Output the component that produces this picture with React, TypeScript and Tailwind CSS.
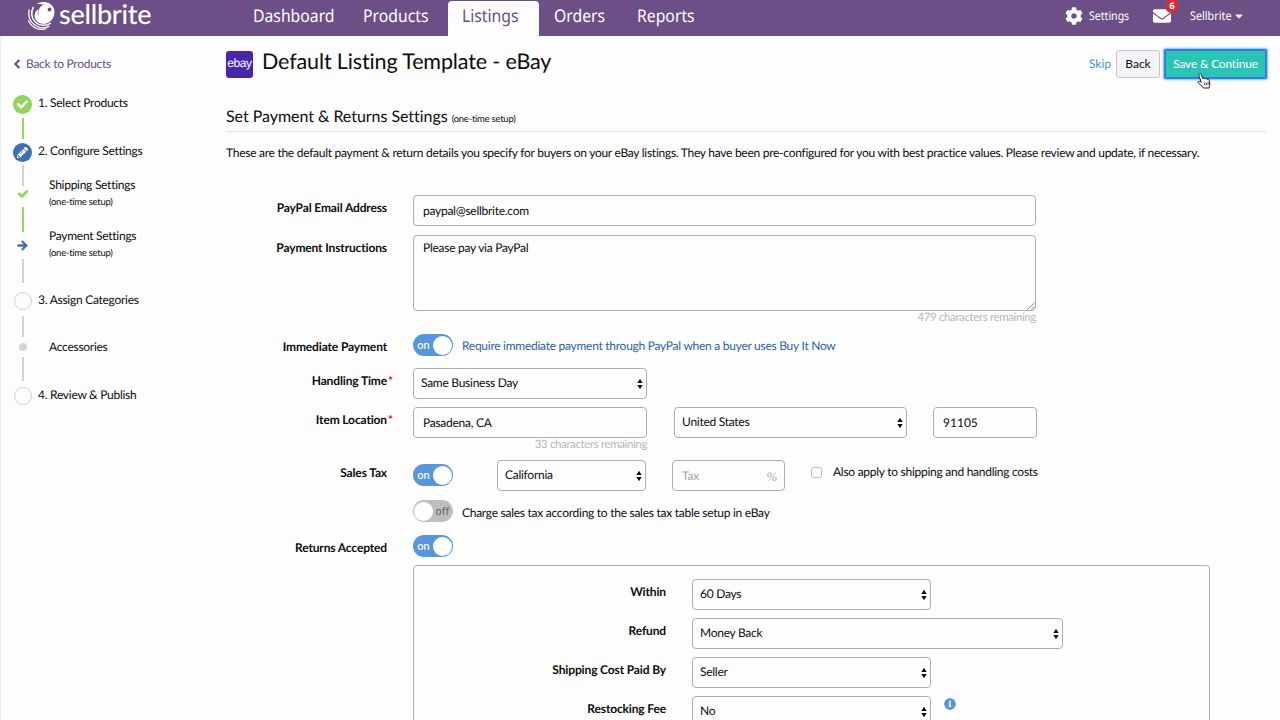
import type { ReactNode } from "react";
import {
  FaArrowRight,
  FaCaretDown,
  FaCheck,
  FaChevronLeft,
  FaCog,
  FaEnvelope,
  FaInfoCircle,
  FaPencilAlt,
} from "react-icons/fa";
import clsx from "clsx";

const NAV_ITEMS = [
  { label: "Dashboard", width: "w-[110px]" },
  { label: "Products", width: "w-[99px]" },
  { label: "Listings", width: "mr-px w-[91px]", active: true },
  { label: "Orders", width: "w-[83px]" },
  { label: "Reports", width: "w-[90px]" },
];

function Logo() {
  return (
    <div className="flex items-center gap-[3px] text-white">
      <svg className="h-[31px] w-[30px]" viewBox="0 0 30 31" fill="none">
        <path
          d="M10.500 4.200C14 1.500 20 1.200 24 3.700C27.800 6 29.300 11 28 15.500C26.500 21 21.500 24.500 16.500 23.800C11.500 23.200 8.300 19.500 8.600 15.300C8.800 12.300 10.300 10.200 12.500 9.200C11.300 11.800 11.600 14 12.800 15.600C11.500 10.500 13.500 6.500 18 4.600C15.500 3.800 12.800 3.700 10.500 4.200Z"
          fill="currentColor"
        />
        <path
          d="M7.500 7C4.500 12 5.300 18.500 9.500 22.300C13.500 26 20 26.500 25 23"
          stroke="currentColor"
          strokeWidth="1.500"
        />
        <path
          d="M3.300 9.500C1.800 15.500 3.700 21.500 8.800 25C13.500 28.200 19 28.500 23.500 26.200"
          stroke="currentColor"
          strokeWidth="1.300"
        />
        <path
          d="M2.300 20.500C5.500 27.500 13 31 20.500 28.700"
          stroke="currentColor"
          strokeWidth="1.200"
        />
        <circle cx="23.500" cy="9.500" r="1.900" fill="#6b4f86" />
      </svg>
      <span className="-mt-[4px] text-[27px] leading-[26px] font-medium tracking-[-0.25px]">
        sellbrite
      </span>
    </div>
  );
}

function Header() {
  return (
    <header className="flex h-9 bg-[#6b4f86] font-['Noto_Sans',sans-serif] tracking-normal text-white">
      <div className="w-[239px] pl-[26px] font-['Lato',sans-serif]">
        <Logo />
      </div>
      <nav className="flex items-end">
        {NAV_ITEMS.map((item) => (
          <a
            key={item.label}
            href="#"
            className={clsx(
              "h-[35px] pl-3.5 text-[17.5px] leading-[31px]",
              item.width,
              item.active && "rounded-t-[4px] bg-[#fdfdfd] text-[#6b4f86]"
            )}
          >
            <span className="inline-block origin-left scale-x-[.9]">
              {item.label}
            </span>
          </a>
        ))}
      </nav>
      <div className="ml-auto flex items-center pr-9 pb-1 text-[12px]">
        <FaCog className="h-[18px] w-[18px]" />
        <span className="w-[70px] pl-1.5">
          <span className="inline-block origin-left scale-x-[.88]">
            Settings
          </span>
        </span>
        <span className="relative">
          <FaEnvelope className="h-[18px] w-[18px]" />
          <span className="absolute -top-[8px] left-3 flex h-[14px] w-[14px] items-center justify-center rounded-full bg-[#d0303a] text-[9px] leading-[14px] font-bold">
            6
          </span>
        </span>
        <span className="w-[62px] pl-[19px]">
          <span className="inline-block origin-left scale-x-[.9]">
            Sellbrite
          </span>
        </span>
        <FaCaretDown className="ml-px h-3 w-2.5" />
      </div>
    </header>
  );
}

type StepStatus = "done" | "editing" | "todo" | "sub-done" | "sub-current" | "sub-todo";

interface Step {
  label: string;
  note?: string;
  status: StepStatus;
  height: string;
  line?: string;
}

const STEPS: Step[] = [
  { label: "1. Select Products", status: "done", height: "h-12", line: "h-[21px] bg-[#96d75f]" },
  { label: "2. Configure Settings", status: "editing", height: "h-[47px]", line: "h-[21px] bg-[#d4d2d6]" },
  { label: "Shipping Settings", note: "(one-time setup)", status: "sub-done", height: "h-[51px]", line: "h-[25px] bg-[#96d75f]" },
  { label: "Payment Settings", note: "(one-time setup)", status: "sub-current", height: "h-[51px]", line: "h-6 bg-[#d4d2d6]" },
  { label: "3. Assign Categories", status: "todo", height: "h-[51px]", line: "h-[21px] bg-[#d4d2d6]" },
  { label: "Accessories", status: "sub-todo", height: "h-11", line: "h-6 bg-[#d4d2d6]" },
  { label: "4. Review & Publish", status: "todo", height: "h-[22px]" },
];

function StepIcon({ status }: { status: StepStatus }) {
  switch (status) {
    case "done":
      return (
        <span className="flex h-[22px] items-center">
          <span className="flex h-[19px] w-[19px] items-center justify-center rounded-full bg-[#8fd45c] text-white">
            <FaCheck className="h-[11px] w-[11px] stroke-[24]" />
          </span>
        </span>
      );
    case "editing":
      return (
        <span className="flex h-[22px] items-center">
          <span className="flex h-[19px] w-[19px] items-center justify-center rounded-full bg-[#3b71b0] text-white">
            <FaPencilAlt className="h-[11px] w-[11px]" />
          </span>
        </span>
      );
    case "sub-done":
      return (
        <span className="flex h-3 items-center text-[#8fd45c]">
          <FaCheck className="h-[10px] w-[10px] overflow-visible stroke-[50]" />
        </span>
      );
    case "sub-current":
      return (
        <span className="flex h-3 items-center text-[#3b71b0]">
          <FaArrowRight className="h-[11px] w-[11px] overflow-visible stroke-[36]" />
        </span>
      );
    case "sub-todo":
      return (
        <span className="flex h-3 items-center">
          <span className="h-2 w-2 rounded-full bg-[#d4d4d4]" />
        </span>
      );
    default:
      return (
        <span className="flex h-[22px] items-center">
          <span className="h-[18px] w-[18px] rounded-full border-[1.5px] border-[#d0d0d0]" />
        </span>
      );
  }
}

function Sidebar() {
  return (
    <aside className="w-[226px] shrink-0 border-l border-[#efedf2] pt-[18px] pl-3">
      <a href="#" className="flex items-center gap-[5px] text-[#6b4f86]">
        <FaChevronLeft className="h-2.5 w-2 overflow-visible stroke-[40]" />
        Back to Products
      </a>
      <ol className="mt-[19px]">
        {STEPS.map((step) => {
          const isSub = step.status.startsWith("sub");
          return (
            <li key={step.label} className={clsx("flex", step.height)}>
              <div className="flex w-[19px] flex-col items-center">
                <StepIcon status={step.status} />
                {step.line && (
                  <span className="flex flex-1 items-center">
                    <span className={clsx("w-[2px]", step.line)} />
                  </span>
                )}
              </div>
              <div
                className={clsx(
                  isSub ? "pl-[17px]" : "pl-1.5",
                  isSub && (step.note ? "-mt-[13px]" : "-mt-1")
                )}
              >
                <div>{step.label}</div>
                {step.note && (
                  <div className="-mt-[2.5px] text-[9.5px]">{step.note}</div>
                )}
              </div>
            </li>
          );
        })}
      </ol>
    </aside>
  );
}

function Toggle({ on = false }: { on?: boolean }) {
  return (
    <button
      type="button"
      role="switch"
      aria-checked={on}
      className={clsx(
        "flex h-[22px] w-10 shrink-0 items-center rounded-full px-px text-[11px] leading-none font-medium tracking-normal",
        on
          ? "bg-[#5896db] text-white"
          : "flex-row-reverse bg-[#bfbdc1] text-[#6d6b70]"
      )}
    >
      <span className="flex-1 pb-px text-center">{on ? "on" : "off"}</span>
      <span className="h-[19px] w-[19px] rounded-full bg-white" />
    </button>
  );
}

const BOX = "h-[31px] rounded-[4px] border border-[#adadad]";

function Select({ value, width }: { value: string; width: string }) {
  return (
    <div
      className={clsx("flex items-center justify-between pr-[3px] pl-[7px]", BOX, width)}
    >
      <span className="-mt-px">{value}</span>
      <svg className="h-3 w-[6px]" viewBox="0 0 6 12" fill="#111">
        <path d="M3 .8L5.700 5H.3ZM3 11.200L5.700 7H.3Z" />
      </svg>
    </div>
  );
}

function TextBox({ value, width }: { value: string; width: string }) {
  return (
    <div className={clsx("flex items-center pl-[9px]", BOX, width)}>{value}</div>
  );
}

interface FormRowProps {
  label?: string;
  required?: boolean;
  height: string;
  labelWidth?: string;
  children: ReactNode;
}

function FormRow({
  label,
  required,
  height,
  labelWidth = "w-[161px]",
  children,
}: FormRowProps) {
  return (
    <div className={clsx("flex items-start", height)}>
      <div
        className={clsx(
          "relative shrink-0 pt-[3px] text-right font-bold tracking-[-0.14px]",
          labelWidth
        )}
      >
        {label}
        {required && (
          <span className="absolute top-[3px] left-full pl-px text-[#c9302c]">*</span>
        )}
      </div>
      <div className="flex items-start pl-[26px]">{children}</div>
    </div>
  );
}

function ReturnsPanel() {
  const labelWidth = "w-[252px]";
  return (
    <div className="ml-[187px] h-[220px] w-[797px] rounded-[4px] border border-[#adadad] pt-[13px]">
      <FormRow label="Within" height="h-[39px]" labelWidth={labelWidth}>
        <Select value="60 Days" width="w-[239px]" />
      </FormRow>
      <FormRow label="Refund" height="h-[39px]" labelWidth={labelWidth}>
        <Select value="Money Back" width="w-[371px]" />
      </FormRow>
      <FormRow label="Shipping Cost Paid By" height="h-[39px]" labelWidth={labelWidth}>
        <Select value="Seller" width="w-[239px]" />
      </FormRow>
      <FormRow label="Restocking Fee" height="h-[39px]" labelWidth={labelWidth}>
        <Select value="No" width="w-[239px]" />
        <FaInfoCircle className="mt-0.5 ml-[13px] h-3 w-3 text-[#5896db]" />
      </FormRow>
    </div>
  );
}

function HandCursor() {
  return (
    <svg
      className="absolute top-[22px] left-[31px] h-[16px] w-[14px]"
      viewBox="0 0 14 16"
      fill="#fff"
      stroke="#222"
      strokeWidth="1"
      strokeLinejoin="round"
    >
      <path d="M2.200 1.200C3 .5 4 .8 4.400 1.800L5.800 5.600C6.300 5 7.400 5 7.800 5.900C8.500 5.300 9.600 5.500 10 6.400C10.800 5.900 11.800 6.300 12.100 7.200L12.800 10C13.100 11.500 12.600 12.500 12.300 13.500L12.200 15H6.300L5.800 13.900C4.600 12.700 3.200 11.300 1.200 9.800C.6 9.200 1.200 8 2.400 8.300L4.200 9.200L1.900 2.600C1.700 2 1.800 1.600 2.200 1.200Z" />
      <path d="M7.200 9.500L7.700 12.500M9.200 9.300L9.500 12.300M11 9L11.200 12" strokeWidth=".8" />
    </svg>
  );
}

export default function App() {
  return (
    <div className="h-[720px] w-[1280px] overflow-hidden bg-[#fdfdfd] font-['Lato',sans-serif] text-[12px] leading-5 tracking-[-0.27px] text-[#0c0c0c] [font-variant-ligatures:none] [text-rendering:geometricPrecision]">
      <Header />
      <div className="flex">
        <Sidebar />
        <main className="w-[1040px] shrink-0">
          {/* Title bar */}
          <div className="flex items-center pt-[13px]">
            <span className="flex h-[27px] w-[27px] items-center justify-center rounded-[3px] bg-[#4a25a5] font-['Liberation_Sans',sans-serif] text-[12px] leading-none tracking-[-0.4px] text-white">
              <span className="-mt-0.5">ebay</span>
            </span>
            <h1 className="-mt-[5px] pl-[9px] text-[21.5px] leading-[27px] tracking-[-0.13px]">
              Default Listing Template - eBay
            </h1>
            <div className="ml-auto flex items-center">
              <a href="#" className="pr-[5px] tracking-normal text-[#4b8fd0]">
                Skip
              </a>
              <button
                type="button"
                className="h-7 w-11 rounded-[3px] border border-[#c6c3ca] bg-[#f5f3f7] tracking-normal"
              >
                Back
              </button>
              <button
                type="button"
                className="relative -mr-px ml-1 h-[30px] w-[103px] rounded-[2px] border-2 border-[#2a83dc] bg-[#2bc4b4] tracking-[-0.2px] text-white shadow-[0_0_2px_1px_#7fb4ee]"
              >
                Save &amp; Continue
                <HandCursor />
              </button>
            </div>
          </div>

          <h2 className="mt-[27px] h-[26px] border-b border-[#e0e0e0] pt-px text-[16px] tracking-[-0.04px]">
            Set Payment &amp; Returns Settings{" "}
            <span className="text-[9.5px] tracking-[-0.25px]">
              (one-time setup)
            </span>
          </h2>
          <p className="mt-[11px] whitespace-nowrap">
            These are the default payment &amp; return details you specify for
            buyers on your eBay listings. They have been pre-configured for you
            with best practice values. Please review and update, if necessary.
          </p>

          {/* Payment form */}
          <div className="mt-[32px]">
            <FormRow label="PayPal Email Address" height="h-10">
              <TextBox value="paypal@sellbrite.com" width="w-[623px]" />
            </FormRow>
            <FormRow label="Payment Instructions" height="h-[99px]">
              <div>
                <div className="relative h-[76px] w-[623px] rounded-[4px] border border-[#adadad] pt-[2px] pl-[9px]">
                  Please pay via PayPal
                  <svg
                    className="absolute right-0 bottom-0 h-2 w-2"
                    viewBox="0 0 8 8"
                    stroke="#777"
                    strokeWidth=".9"
                  >
                    <path d="M.5 7.500L7.500 .8M4.300 7.500L7.500 4.400" />
                  </svg>
                </div>
                <div className="-mt-[3px] text-right text-[11.5px] tracking-[-0.38px] text-[#b8b8b8]">
                  479 characters remaining
                </div>
              </div>
            </FormRow>
            <FormRow label="Immediate Payment" height="h-[34px]">
              <Toggle on />
              <span className="pt-0.5 pl-[9px] text-[#2c639f]">
                Require immediate payment through PayPal when a buyer uses Buy
                It Now
              </span>
            </FormRow>
            <FormRow label="Handling Time" required height="h-[39px]">
              <Select value="Same Business Day" width="w-[234px]" />
            </FormRow>
            <FormRow label="Item Location" required height="h-[53px]">
              <div>
                <TextBox value="Pasadena, CA" width="w-[234px]" />
                <div className="-mt-[3px] text-right text-[11.5px] tracking-[-0.38px] text-[#b8b8b8]">
                  33 characters remaining
                </div>
              </div>
              <div className="pl-[27px]">
                <Select value="United States" width="w-[233px]" />
              </div>
              <div className="pl-[26px] tracking-normal">
                <TextBox value="91105" width="w-[104px]" />
              </div>
            </FormRow>
            <FormRow label="Sales Tax" height="h-10">
              <div className="flex w-[84px] pt-1">
                <Toggle on />
              </div>
              <Select value="California" width="w-[149px]" />
              <div className="pl-[26px]">
                <div
                  className={clsx(
                    "flex w-[113px] items-center justify-between pr-[7px] pl-[9px] text-[#a9a9a9]",
                    BOX
                  )}
                >
                  <span>Tax</span>
                  <span className="pt-0.5 font-['Liberation_Serif',serif] text-[13px] italic">
                    %
                  </span>
                </div>
              </div>
              <label className="flex items-center pt-[2px] pl-[26px]">
                <span className="h-[11px] w-[11px] rounded-[3px] border border-[#bdbdbd]" />
                <span className="pl-[11px]">
                  Also apply to shipping and handling costs
                </span>
              </label>
            </FormRow>
            <FormRow height="h-[35px]">
              <Toggle />
              <span className="pt-[3px] pl-[9px]">
                Charge sales tax according to the sales tax table setup in eBay
              </span>
            </FormRow>
            <FormRow label="Returns Accepted" height="h-[30px]">
              <Toggle on />
            </FormRow>
            <ReturnsPanel />
          </div>
        </main>
      </div>
    </div>
  );
}
